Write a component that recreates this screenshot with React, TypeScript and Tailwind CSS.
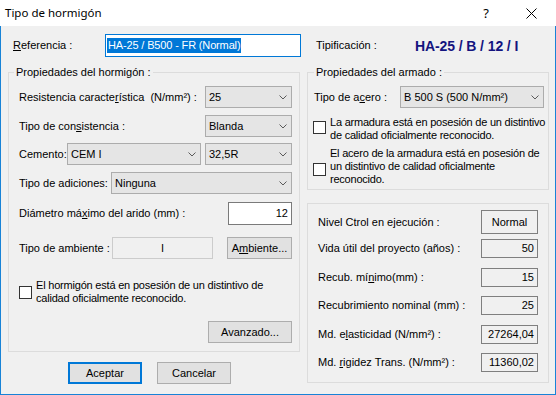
import React from "react";

function Chevron() {
  return (
    <svg width="8" height="5" viewBox="0 0 8 5" className="shrink-0">
      <path d="M0.5 0.5 L4 4 L7.5 0.5" fill="none" stroke="#5a5a5a" strokeWidth="1" />
    </svg>
  );
}

function Select({ w, value }: { w: string; value: string }) {
  return (
    <div className={`flex items-center justify-between h-[22px] ${w} bg-[#e5e5e5] border border-[#acacac] pl-[3px] pr-[4px] shrink-0`}>
      <span className="whitespace-nowrap">{value}</span>
      <Chevron />
    </div>
  );
}

function Check() {
  return <div className="w-[13px] h-[13px] border border-[#333333] bg-white shrink-0" />;
}

function Btn({ w, children, primary }: { w: string; children: React.ReactNode; primary?: boolean }) {
  return (
    <div
      className={`flex items-center justify-center h-[22px] ${w} bg-[#e1e1e1] shrink-0 ${
        primary ? "border-2 border-[#0078d7]" : "border border-[#adadad]"
      }`}
    >
      {children}
    </div>
  );
}

function Box({ children, center, h }: { children: React.ReactNode; center?: boolean; h: string }) {
  return (
    <div
      className={`w-[57px] ${h} border border-[#7f7f7f] bg-[#f0f0f0] flex items-center shrink-0 ${
        center ? "justify-center" : "justify-end pr-[3px]"
      }`}
    >
      {children}
    </div>
  );
}

export default function App() {
  return (
    <div className="w-[556px] h-[395px] flex flex-col font-['Liberation_Sans',Arial,sans-serif] text-[11px] leading-[13px] text-black">
      {/* title bar */}
      <div className="h-[26px] bg-white flex items-center shrink-0 relative">
        <span className="ml-[5px] font-['Noto_Sans',sans-serif] text-[11.5px] leading-[16px]">Tipo de hormigón</span>
        <span className="ml-auto mr-[37px] font-['Noto_Sans',sans-serif] text-[13px] leading-[16px]">?</span>
        <svg width="11" height="11" viewBox="0 0 11 11" className="mr-[19px]">
          <path d="M0.5 0.5 L10.5 10.5 M10.5 0.5 L0.5 10.5" stroke="#000" strokeWidth="1" />
        </svg>
      </div>

      {/* body */}
      <div className="flex-1 bg-[#f0f0f0] border-x border-b border-[#1883d7] flex flex-col">
        {/* row 1 */}
        <div className="mt-[8px] h-[23px] flex items-center pl-[12px]">
          <span className="w-[92px]">
            <u>R</u>eferencia :
          </span>
          <div className="w-[196px] h-[23px] bg-white border border-[#0078d7] flex items-center pl-[1px]">
            <span className="bg-[#0078d7] text-white leading-[15px] px-[1px] tracking-[-0.15px]">HA-25 / B500 - FR (Normal)</span>
          </div>
          <span className="ml-[15px] w-[99px]">Tipificación :</span>
          <span className="font-bold text-[14px] leading-[16px] text-[#14147f] tracking-[-0.1px]">HA-25 / B / 12 / I</span>
        </div>

        {/* columns */}
        <div className="mt-[15px] flex pl-[7px] gap-[7px]">
          {/* left column */}
          <div className="w-[292px] flex flex-col">
            <div className="relative h-[280px] border border-[#dcdcdc] flex flex-col pt-[13px] pl-[10px] pr-[7px]">
              <span className="absolute left-[5px] -top-[8px] px-[2px] bg-[#f0f0f0] leading-[14px]">
                Propiedades del hormigón :
              </span>
              <div className="flex items-center justify-between">
                <span>
                  Resistencia caracte<u>r</u>ística&nbsp;&nbsp;(N/mm²) :
                </span>
                <Select w="w-[87px]" value="25" />
              </div>
              <div className="mt-[7px] flex items-center justify-between">
                <span>
                  Tipo de con<u>s</u>istencia :
                </span>
                <Select w="w-[87px]" value="Blanda" />
              </div>
              <div className="mt-[6px] flex items-center">
                <span className="w-[48px]">Cemento:</span>
                <Select w="w-[134px]" value="CEM I" />
                <div className="ml-[4px]">
                  <Select w="w-[87px]" value="32,5R" />
                </div>
              </div>
              <div className="mt-[7px] flex items-center">
                <span className="w-[92px]">Tipo de adiciones:</span>
                <Select w="w-[181px]" value="Ninguna" />
              </div>
              <div className="mt-[8px] flex items-center justify-between">
                <span>
                  Diámetro má<u>x</u>imo del arido (mm) :
                </span>
                <div className="w-[64px] h-[23px] bg-white border border-[#7a7a7a] flex items-center justify-end pr-[3px]">
                  12
                </div>
              </div>
              <div className="mt-[12px] flex items-center">
                <span className="w-[93px]">Tipo de ambiente :</span>
                <div className="w-[101px] h-[22px] border border-[#cccccc] flex items-center justify-center">I</div>
                <div className="ml-[14px]">
                  <Btn w="w-[65px]">
                    <span>
                      A<u>m</u>biente...
                    </span>
                  </Btn>
                </div>
              </div>
              <div className="mt-[20px] flex items-center gap-[4px]">
                <Check />
                <span className="whitespace-nowrap tracking-[-0.2px]">
                  El hormigón está en posesión de un distintivo de
                  <br />
                  calidad oficialmente reconocido.
                </span>
              </div>
              <div className="mt-[16px] flex justify-end">
                <Btn w="w-[84px]">Avanzado...</Btn>
              </div>
            </div>
            <div className="mt-[10px] flex pl-[60px] gap-[15px]">
              <Btn w="w-[74px]" primary>
                Aceptar
              </Btn>
              <Btn w="w-[74px]">Cancelar</Btn>
            </div>
          </div>

          {/* right column */}
          <div className="w-[242px] flex flex-col">
            <div className="relative h-[118px] border border-[#dcdcdc] flex flex-col pt-[13px] pl-[5px] pr-[4px]">
              <span className="absolute left-[6px] -top-[8px] px-[2px] bg-[#f0f0f0] leading-[14px]">
                Propiedades del armado :
              </span>
              <div className="flex items-center justify-between pl-[1px]">
                <span>
                  Tipo de a<u>c</u>ero :
                </span>
                <Select w="w-[144px]" value="B 500 S (500 N/mm²)" />
              </div>
              <div className="mt-[8px] flex items-start gap-[4px]">
                <div className="mt-[5px]">
                  <Check />
                </div>
                <span className="whitespace-nowrap tracking-[-0.22px]">
                  La armadura está en posesión de un distintivo
                  <br />
                  de calidad oficialmente reconocido.
                </span>
              </div>
              <div className="mt-[5px] flex items-start gap-[4px]">
                <div className="mt-[16px]">
                  <Check />
                </div>
                <span className="whitespace-nowrap tracking-[-0.22px]">
                  El acero de la armadura está en posesión de
                  <br />
                  un distintivo de calidad oficialmente
                  <br />
                  reconocido.
                </span>
              </div>
            </div>

            <div className="mt-[13px] h-[180px] border border-[#dcdcdc] flex flex-col pt-[6px] pl-[10px] pr-[10px]">
              <div className="flex items-center justify-between">
                <span>Nivel Ctrol en ejecución :</span>
                <Box h="h-[24px]" center>
                  Normal
                </Box>
              </div>
              <div className="mt-[5px] flex items-center justify-between">
                <span>Vida útil del proyecto (años) :</span>
                <Box h="h-[19px]">50</Box>
              </div>
              <div className="mt-[10px] flex items-center justify-between">
                <span>
                  Recub. mí<u>n</u>imo(mm) :
                </span>
                <Box h="h-[19px]">15</Box>
              </div>
              <div className="mt-[9px] flex items-center justify-between">
                <span>Recubrimiento nominal (mm) :</span>
                <Box h="h-[19px]">25</Box>
              </div>
              <div className="mt-[10px] flex items-center justify-between">
                <span>
                  Md. e<u>l</u>asticidad (N/mm²) :
                </span>
                <Box h="h-[19px]">27264,04</Box>
              </div>
              <div className="mt-[9px] flex items-center justify-between">
                <span>
                  Md. <u>r</u>igidez Trans. (N/mm²) :
                </span>
                <Box h="h-[19px]">11360,02</Box>
              </div>
            </div>
          </div>
        </div>
      </div>
    </div>
  );
}
